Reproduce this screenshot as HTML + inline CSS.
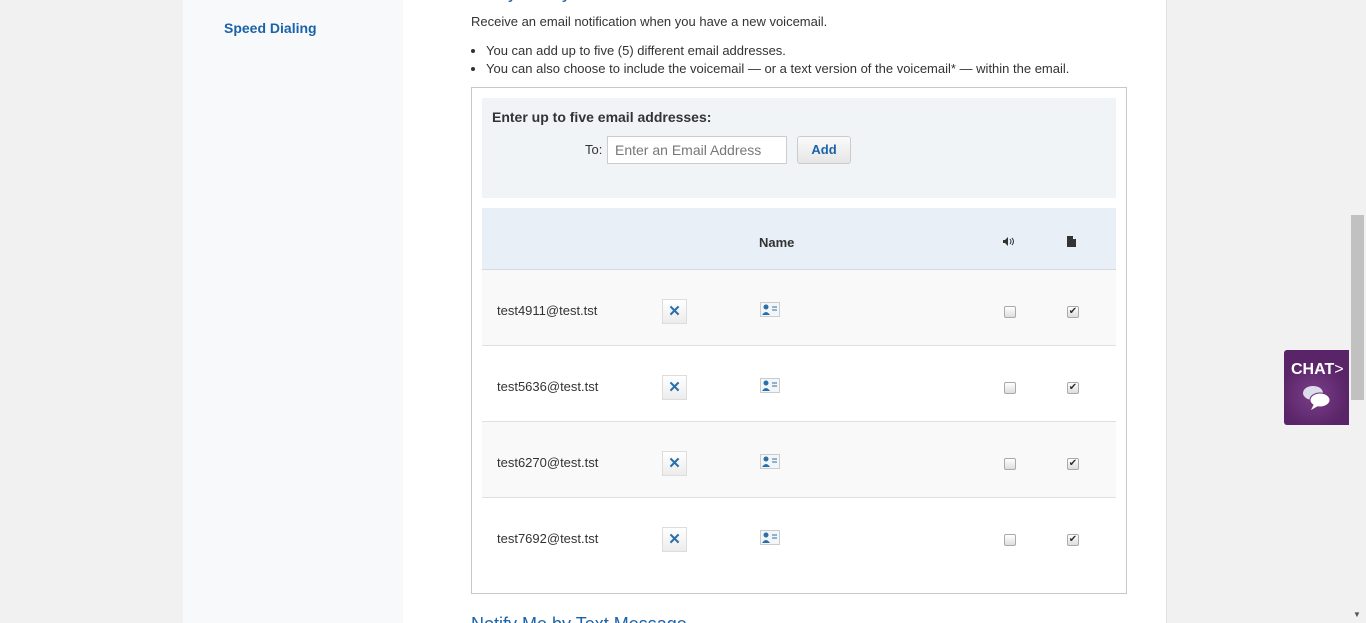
<!DOCTYPE html>
<html><head><meta charset="utf-8"><style>
*{box-sizing:border-box;margin:0;padding:0}
html,body{width:1366px;height:623px;overflow:hidden}
body{background:#f1f1f1;font-family:"Liberation Sans",Arial,sans-serif;font-size:13px;color:#333;position:relative}
.panel{position:absolute;left:183px;top:0;width:984px;height:623px;background:#fff;border-left:1px solid #e2e2e2;border-right:1px solid #e2e2e2}
.side{position:absolute;left:183px;top:0;width:220px;height:623px;background:#f8f9fb}
.side a{position:absolute;left:41px;top:20px;color:#1a63a8;font-weight:bold;font-size:14px}
.abs{position:absolute}
.box{position:absolute;left:471px;top:87px;width:656px;height:507px;border:1px solid #c8c8c8}
.entry{position:absolute;left:482px;top:98px;width:634px;height:100px;background:#f0f4f7}
.thead{position:absolute;left:482px;top:208px;width:634px;height:62px;background:#e8eff7;border-bottom:1px solid #d6dbe0}
.row{position:absolute;left:482px;width:634px;height:76px;border-bottom:1px solid #e0e0e0}
.row .em{position:absolute;left:15px;top:33px}
.x{position:absolute;left:180px;top:29px;width:25px;height:25px;border:1px solid #ddd;background:linear-gradient(#fff,#ececec);color:#2a6fa8;font-weight:bold;font-size:15px;text-align:center;line-height:23px}
.card{position:absolute;left:278px;top:32px;width:20px;height:15px;border:1px solid #ccc;background:#f3f6f9}
.cb{position:absolute;top:36px;width:12px;height:12px;border:1px solid #aaa;border-radius:2px;background:linear-gradient(#fff,#ddd);font-size:10px;line-height:10px;text-align:center;color:#333}
.sb{position:absolute;left:1349px;top:0;width:17px;height:623px;background:#f1f1f1}
</style></head><body>
<div class="panel"></div>
<div class="side"><a>Speed Dialing</a></div>
<div class="abs" style="left:471px;top:-18px;font-size:18px;color:#1a63a8">Notify Me by Email</div>
<div class="abs" style="left:471px;top:14px">Receive an email notification when you have a new voicemail.</div>
<ul class="abs" style="left:486px;top:42px;line-height:18px;list-style:disc">
<li>You can add up to five (5) different email addresses.</li>
<li>You can also choose to include the voicemail — or a text version of the voicemail* — within the email.</li></ul>
<div class="box"></div>
<div class="entry">
<div class="abs" style="left:10px;top:11px;font-weight:bold;font-size:14px">Enter up to five email addresses:</div>
<div class="abs" style="left:103px;top:44px">To:</div>
<div class="abs" style="left:125px;top:38px;width:180px;height:28px;background:#fff;border:1px solid #ccc;padding:5px 7px;color:#777;font-size:14px">Enter an Email Address</div>
<div class="abs" style="left:315px;top:38px;width:54px;height:28px;border:1px solid #ccc;border-radius:3px;background:linear-gradient(#fafafa,#e6e6e6);color:#1a63a8;font-weight:bold;text-align:center;line-height:26px">Add</div>
</div>
<div class="thead">
<div class="abs" style="left:277px;top:27px;font-weight:bold">Name</div>
<svg class="abs" style="left:521px;top:29px" width="12" height="9"><path d="M0 3H2L5 0V9L2 6H0Z" fill="#333"/><path d="M7 2Q9 4.5 7 7M9 1Q12 4.5 9 8" stroke="#333" fill="none"/></svg>
<svg class="abs" style="left:585px;top:28px" width="9" height="11"><path d="M0 0H6L9 3V11H0Z" fill="#333"/><path d="M6 0V3H9" fill="#fff"/></svg>
</div>
<div class="row" style="top:270px;background:#f9f9f9"><span class="em">test4911@test.tst</span><div class="x">✕</div><div class="card"><svg width="18" height="13"><circle cx="5" cy="4" r="2.5" fill="#2a6fa8"/><path d="M1 12 Q5 6 9 12Z" fill="#2a6fa8"/><path d="M11 4h5M11 7h5" stroke="#2a6fa8"/></svg></div><div class="cb" style="left:522px"></div><div class="cb" style="left:585px">✔</div></div>
<div class="row" style="top:346px;background:#fff"><span class="em">test5636@test.tst</span><div class="x">✕</div><div class="card"><svg width="18" height="13"><circle cx="5" cy="4" r="2.5" fill="#2a6fa8"/><path d="M1 12 Q5 6 9 12Z" fill="#2a6fa8"/><path d="M11 4h5M11 7h5" stroke="#2a6fa8"/></svg></div><div class="cb" style="left:522px"></div><div class="cb" style="left:585px">✔</div></div>
<div class="row" style="top:422px;background:#f9f9f9"><span class="em">test6270@test.tst</span><div class="x">✕</div><div class="card"><svg width="18" height="13"><circle cx="5" cy="4" r="2.5" fill="#2a6fa8"/><path d="M1 12 Q5 6 9 12Z" fill="#2a6fa8"/><path d="M11 4h5M11 7h5" stroke="#2a6fa8"/></svg></div><div class="cb" style="left:522px"></div><div class="cb" style="left:585px">✔</div></div>
<div class="row" style="top:498px;background:#fff;border-bottom:none"><span class="em">test7692@test.tst</span><div class="x">✕</div><div class="card"><svg width="18" height="13"><circle cx="5" cy="4" r="2.5" fill="#2a6fa8"/><path d="M1 12 Q5 6 9 12Z" fill="#2a6fa8"/><path d="M11 4h5M11 7h5" stroke="#2a6fa8"/></svg></div><div class="cb" style="left:522px"></div><div class="cb" style="left:585px">✔</div></div>
<div class="abs" style="left:471px;top:614px;font-size:18px;color:#1a63a8">Notify Me by Text Message</div>
<div class="abs" style="left:1284px;top:350px;width:65px;height:75px;background:radial-gradient(circle at 30px 45px,#7a3f88,#5a2468 60%);border-radius:3px 0 0 3px">
<div class="abs" style="left:7px;top:11px;color:#fff;font-weight:bold;font-size:16px">CHAT<span style="font-weight:normal">&gt;</span></div>
<svg class="abs" style="left:18px;top:34px" width="30" height="28"><ellipse cx="11" cy="9" rx="10" ry="7" fill="#dde" /><ellipse cx="18" cy="16" rx="10" ry="7" fill="#fff" stroke="#6a3078"/><path d="M12 20 L9 26 L16 22Z" fill="#fff"/></svg>
</div>
<div class="sb"><div class="abs" style="left:2px;top:215px;width:13px;height:185px;background:#c1c1c1"></div><div class="abs" style="left:4px;top:610px;font-size:8px;color:#555">▼</div></div>
</body></html>
